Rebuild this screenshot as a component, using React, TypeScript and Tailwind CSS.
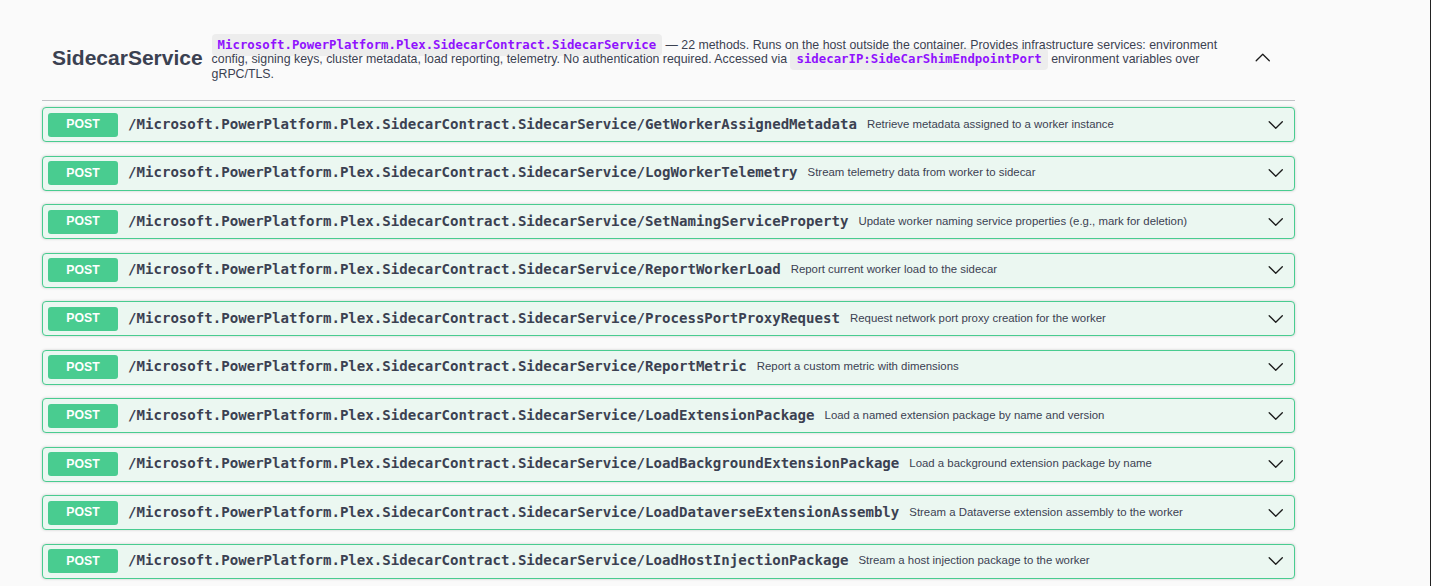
import React from "react";

const BASE = "/Microsoft.PowerPlatform.Plex.SidecarContract.SidecarService/";

const methods: { name: string; summary: string }[] = [
  { name: "GetWorkerAssignedMetadata", summary: "Retrieve metadata assigned to a worker instance" },
  { name: "LogWorkerTelemetry", summary: "Stream telemetry data from worker to sidecar" },
  { name: "SetNamingServiceProperty", summary: "Update worker naming service properties (e.g., mark for deletion)" },
  { name: "ReportWorkerLoad", summary: "Report current worker load to the sidecar" },
  { name: "ProcessPortProxyRequest", summary: "Request network port proxy creation for the worker" },
  { name: "ReportMetric", summary: "Report a custom metric with dimensions" },
  { name: "LoadExtensionPackage", summary: "Load a named extension package by name and version" },
  { name: "LoadBackgroundExtensionPackage", summary: "Load a background extension package by name" },
  { name: "LoadDataverseExtensionAssembly", summary: "Stream a Dataverse extension assembly to the worker" },
  { name: "LoadHostInjectionPackage", summary: "Stream a host injection package to the worker" },
];

function Chevron({ up = false }: { up?: boolean }) {
  return (
    <svg width="17.5" height="17.5" viewBox="0 0 20 20" fill="none" stroke="#1b1b1b" strokeWidth="1.5" strokeLinecap="round" strokeLinejoin="round" aria-hidden>
      {up ? <polyline points="2.5,13.5 10,6 17.5,13.5" /> : <polyline points="2.5,6.5 10,14 17.5,6.5" />}
    </svg>
  );
}

function Code({ children }: { children: React.ReactNode }) {
  return (
    <code className="rounded-[4px] bg-black/5 px-[6px] py-[4px] font-['DejaVu_Sans_Mono',monospace] text-[12.35px] font-semibold text-[#9012fe]">
      {children}
    </code>
  );
}

function Operation({ name, summary }: { name: string; summary: string }) {
  return (
    <div className="mb-[13.5px] flex h-[35px] items-center rounded-[4px] border border-[#49cc90] bg-[#ebf7f1] pl-[5px] pr-[10px] shadow-[0_0_3px_rgba(0,0,0,0.19)]">
      <span className="flex h-[24px] w-[70px] shrink-0 items-center justify-center rounded-[3px] bg-[#49cc90] font-['Liberation_Sans',sans-serif] text-[12.25px] font-bold text-white">
        POST
      </span>
      <span className="pl-[10px] font-['DejaVu_Sans_Mono',monospace] text-[14.08px] font-bold whitespace-nowrap text-[#3b4151]">
        {BASE}
        {name}
      </span>
      <span className="flex-1 pl-[10px] font-['Liberation_Sans',sans-serif] text-[11.4px] whitespace-nowrap text-[#3b4151]">
        {summary}
      </span>
      <Chevron />
    </div>
  );
}

export default function App() {
  return (
    <div className="min-h-[586px] w-full overflow-hidden border-r border-[#222] bg-[#fafafa] pt-[15px]">
      <div className="ml-[42px] w-[1253px]">
        <div className="mb-[6px] flex h-[86px] items-center border-b border-[rgba(59,65,81,0.3)] pl-[10px]">
          <h3 className="shrink-0 font-['Liberation_Sans',sans-serif] text-[21px] font-bold text-[#3b4151]">SidecarService</h3>
          <p className="ml-[9px] mt-[4px] w-[1020px] font-['Liberation_Sans',sans-serif] text-[12.35px] leading-[14.5px] text-[#3b4151]">
            <Code>Microsoft.PowerPlatform.Plex.SidecarContract.SidecarService</Code> — 22 methods. Runs on the host
            outside the container. Provides infrastructure services: environment config, signing keys, cluster
            metadata, load reporting, telemetry. No authentication required. Accessed via{" "}
            <Code>sidecarIP:SideCarShimEndpointPort</Code> environment variables over gRPC/TLS.
          </p>
          <div className="ml-[22px] flex">
            <Chevron up />
          </div>
        </div>
        {methods.map((m) => (
          <Operation key={m.name} {...m} />
        ))}
      </div>
    </div>
  );
}
